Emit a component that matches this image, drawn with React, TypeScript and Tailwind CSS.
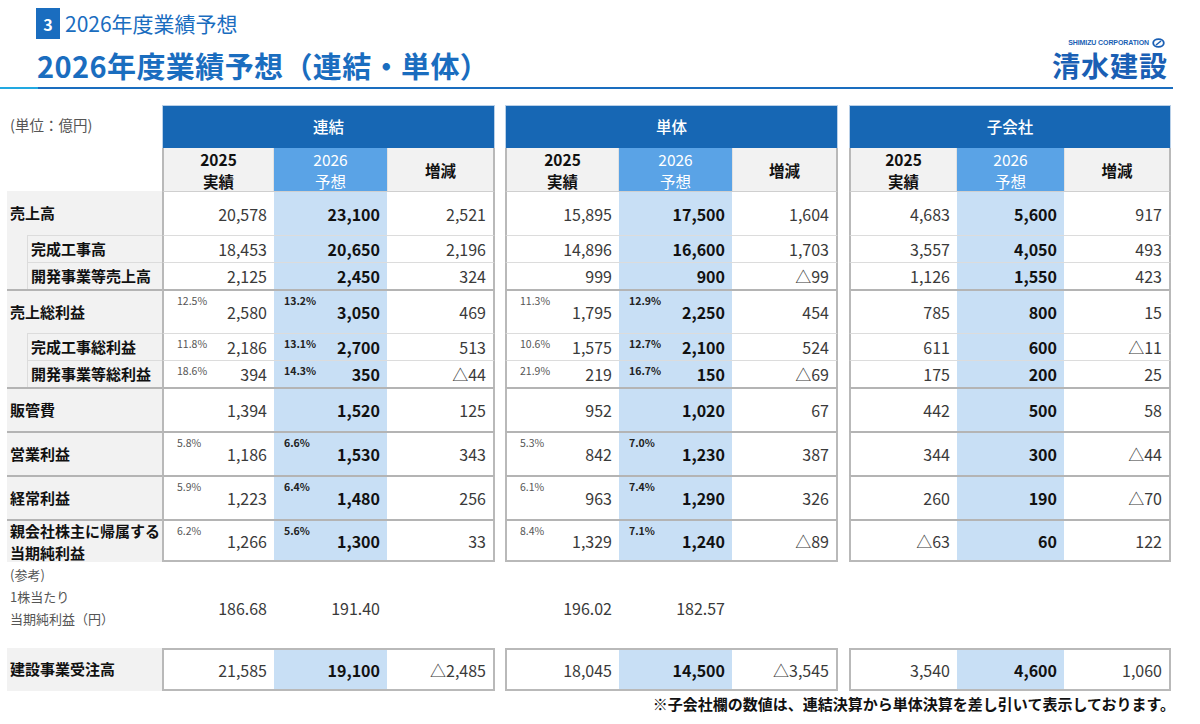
import React from "react";

const FONT = { fontFamily: '"Noto Sans CJK JP", "Noto Sans", sans-serif' };
const GRID =
  "grid grid-cols-[155px_112px_113px_108px_10px_114px_113px_106px_11px_108px_107px_107px]";

type V = [string | null, string, string | null, string, string];

type RowDef = {
  label: string;
  kind: "major" | "minor";
  first?: boolean;
  h: number;
  two?: boolean;
  data: [V, V, V];
};

const rows: RowDef[] = [
  {
    label: "売上高",
    kind: "major",
    first: true,
    h: 44,
    data: [
      [null, "20,578", null, "23,100", "2,521"],
      [null, "15,895", null, "17,500", "1,604"],
      [null, "4,683", null, "5,600", "917"],
    ],
  },
  {
    label: "完成工事高",
    kind: "minor",
    h: 27,
    data: [
      [null, "18,453", null, "20,650", "2,196"],
      [null, "14,896", null, "16,600", "1,703"],
      [null, "3,557", null, "4,050", "493"],
    ],
  },
  {
    label: "開発事業等売上高",
    kind: "minor",
    h: 27,
    data: [
      [null, "2,125", null, "2,450", "324"],
      [null, "999", null, "900", "△99"],
      [null, "1,126", null, "1,550", "423"],
    ],
  },
  {
    label: "売上総利益",
    kind: "major",
    h: 44,
    data: [
      ["12.5%", "2,580", "13.2%", "3,050", "469"],
      ["11.3%", "1,795", "12.9%", "2,250", "454"],
      [null, "785", null, "800", "15"],
    ],
  },
  {
    label: "完成工事総利益",
    kind: "minor",
    h: 27,
    data: [
      ["11.8%", "2,186", "13.1%", "2,700", "513"],
      ["10.6%", "1,575", "12.7%", "2,100", "524"],
      [null, "611", null, "600", "△11"],
    ],
  },
  {
    label: "開発事業等総利益",
    kind: "minor",
    h: 27,
    data: [
      ["18.6%", "394", "14.3%", "350", "△44"],
      ["21.9%", "219", "16.7%", "150", "△69"],
      [null, "175", null, "200", "25"],
    ],
  },
  {
    label: "販管費",
    kind: "major",
    h: 44,
    data: [
      [null, "1,394", null, "1,520", "125"],
      [null, "952", null, "1,020", "67"],
      [null, "442", null, "500", "58"],
    ],
  },
  {
    label: "営業利益",
    kind: "major",
    h: 44,
    data: [
      ["5.8%", "1,186", "6.6%", "1,530", "343"],
      ["5.3%", "842", "7.0%", "1,230", "387"],
      [null, "344", null, "300", "△44"],
    ],
  },
  {
    label: "経常利益",
    kind: "major",
    h: 44,
    data: [
      ["5.9%", "1,223", "6.4%", "1,480", "256"],
      ["6.1%", "963", "7.4%", "1,290", "326"],
      [null, "260", null, "190", "△70"],
    ],
  },
  {
    label: "親会社株主に帰属する\n当期純利益",
    kind: "major",
    h: 43,
    two: true,
    data: [
      ["6.2%", "1,266", "5.6%", "1,300", "33"],
      ["8.4%", "1,329", "7.1%", "1,240", "△89"],
      [null, "△63", null, "60", "122"],
    ],
  },
];

function secEdge(idx: number) {
  if (idx === 0) return "border-l-2 border-l-[#b9b9b9]";
  if (idx === 2) return "border-r-2 border-r-[#b9b9b9]";
  return "";
}

function DataCell({
  idx,
  pct,
  val,
  h,
  top,
  bottom,
}: {
  idx: number;
  pct: string | null;
  val: string;
  h: number;
  top: string;
  bottom?: boolean;
}) {
  const bold = idx === 1;
  return (
    <div
      className={`relative flex items-center justify-end pr-[7px] ${top} ${secEdge(idx)} ${
        bottom ? "border-b-2 border-b-[#b9b9b9]" : ""
      } ${bold ? "bg-[#c8dff5] font-bold text-[#111]" : "bg-white text-[#3a3a3a]"} text-[16px]`}
      style={{ height: h }}
    >
      {pct ? (
        <span
          className={`absolute top-[3px] text-[10.5px] leading-[14px] ${
            bold ? "left-[10px] font-bold text-[#222]" : "left-[13px] font-normal text-[#555]"
          }`}
        >
          {pct}
        </span>
      ) : null}
      <span className="leading-none">{val}</span>
    </div>
  );
}

function TableRow({ r, last }: { r: RowDef; last: boolean }) {
  const top = r.first
    ? "border-t border-t-[#cfcfcf]"
    : r.kind === "major"
    ? "border-t-2 border-t-[#b4b4b4]"
    : "border-t border-t-[#dcdcdc]";
  const labelCell =
    r.kind === "minor" ? (
      <div className="bg-[#f2f2f2]" style={{ height: r.h }}>
        <div className="ml-[20px] h-full border-l border-l-[#dcdcdc] border-t border-t-[#dcdcdc] flex items-center pl-[3px] text-[15px] font-bold text-[#111]">
          {r.label}
        </div>
      </div>
    ) : (
      <div
        className={`bg-[#f2f2f2] flex items-center pl-[3px] text-[15px] font-bold text-[#111] ${
          r.first ? "" : "border-t-2 border-t-[#b4b4b4]"
        }`}
        style={{ height: r.h }}
      >
        {r.two ? (
          <div className="leading-[22px] whitespace-pre-line">{r.label}</div>
        ) : (
          r.label
        )}
      </div>
    );
  const cells: React.ReactNode[] = [labelCell];
  r.data.forEach((d, s) => {
    if (s > 0) cells.push(<div key={"g" + s} />);
    cells.push(
      <DataCell key={s + "a"} idx={0} pct={d[0]} val={d[1]} h={r.h} top={top} bottom={last} />,
      <DataCell key={s + "b"} idx={1} pct={d[2]} val={d[3]} h={r.h} top={top} bottom={last} />,
      <DataCell key={s + "c"} idx={2} pct={null} val={d[4]} h={r.h} top={top} bottom={last} />
    );
  });
  return <div className={GRID}>{cells.map((c, i) => <React.Fragment key={i}>{c}</React.Fragment>)}</div>;
}

function SubHead() {
  const cell = (idx: number) => {
    const blue = idx === 1;
    return (
      <div
        className={`h-[43px] flex flex-col items-center justify-center text-[15.5px] leading-[22px] ${secEdge(idx)} ${
          blue ? "bg-[#5aa3e6] text-white" : "bg-[#f2f2f2] text-[#111] font-bold"
        } ${idx === 0 ? "border-r border-r-[#e2e2e2]" : ""} ${idx === 2 ? "border-l border-l-[#e2e2e2]" : ""}`}
      >
        {idx === 0 ? (
          <>
            <span>2025</span>
            <span>実績</span>
          </>
        ) : idx === 1 ? (
          <>
            <span>2026</span>
            <span>予想</span>
          </>
        ) : (
          <span>増減</span>
        )}
      </div>
    );
  };
  const out: React.ReactNode[] = [<div key="l" className="h-[43px] bg-white" />];
  [0, 1, 2].forEach((s) => {
    if (s > 0) out.push(<div key={"g" + s} />);
    out.push(
      <React.Fragment key={s}>
        {cell(0)}
        {cell(1)}
        {cell(2)}
      </React.Fragment>
    );
  });
  return <div className={GRID}>{out}</div>;
}

function HeadBar() {
  const names = ["連結", "単体", "子会社"];
  const out: React.ReactNode[] = [
    <div key="l" className="h-[43px] pl-[3px] pt-[9px] text-[14.5px] text-[#555]">
      (単位：億円)
    </div>,
  ];
  names.forEach((n, s) => {
    if (s > 0) out.push(<div key={"g" + s} />);
    out.push(
      <div
        key={n}
        className="col-span-3 h-[43px] bg-[#1767b4] border border-[#b9d0e8] border-b-0 flex items-center justify-center text-white text-[15.5px] font-medium"
      >
        {n}
      </div>
    );
  });
  return <div className={GRID}>{out}</div>;
}

function RefBlock() {
  const vals = [
    ["186.68", "191.40"],
    ["196.02", "182.57"],
    ["", ""],
  ];
  const out: React.ReactNode[] = [
    <div key="l" className="h-[86px] pl-[3px] pt-[2px] text-[13px] leading-[22px] text-[#555]">
      <div>(参考)</div>
      <div>1株当たり</div>
      <div>当期純利益（円）</div>
    </div>,
  ];
  vals.forEach((v, s) => {
    if (s > 0) out.push(<div key={"g" + s} />);
    out.push(
      <div key={s + "a"} className="h-[86px] flex items-center justify-end pr-[7px] pt-[6px] text-[16px] text-[#3a3a3a]">
        {v[0]}
      </div>,
      <div key={s + "b"} className="h-[86px] flex items-center justify-end pr-[7px] pt-[6px] text-[16px] text-[#3a3a3a]">
        {v[1]}
      </div>,
      <div key={s + "c"} />
    );
  });
  return <div className={GRID}>{out}</div>;
}

function OrderRow() {
  const data: [string, string, string][] = [
    ["21,585", "19,100", "△2,485"],
    ["18,045", "14,500", "△3,545"],
    ["3,540", "4,600", "1,060"],
  ];
  const top = "border-t-2 border-t-[#b9b9b9]";
  const out: React.ReactNode[] = [
    <div key="l" className="h-[43px] bg-[#f2f2f2] flex items-center pl-[3px] text-[15px] font-bold text-[#111]">
      建設事業受注高
    </div>,
  ];
  data.forEach((d, s) => {
    if (s > 0) out.push(<div key={"g" + s} />);
    out.push(
      <DataCell key={s + "a"} idx={0} pct={null} val={d[0]} h={43} top={top} bottom />,
      <DataCell key={s + "b"} idx={1} pct={null} val={d[1]} h={43} top={top} bottom />,
      <DataCell key={s + "c"} idx={2} pct={null} val={d[2]} h={43} top={top} bottom />
    );
  });
  return <div className={GRID}>{out}</div>;
}

function Logo() {
  return (
    <div className="flex flex-col items-end mr-[32px] mb-[8px]">
      <div className="flex items-center gap-[3px] mr-[3px] h-[10px] mb-[3px]">
        <span
          className="text-[7px] font-bold text-[#1a5fb4] leading-[8px] tracking-[-0.1px]"
          style={{ fontFamily: '"Liberation Sans", Arial, sans-serif' }}
        >
          SHIMIZU CORPORATION
        </span>
        <svg width="13" height="10" viewBox="0 0 13 10">
          <ellipse cx="6.5" cy="5" rx="5.3" ry="3.9" fill="none" stroke="#1a5fb4" strokeWidth="1.8" />
          <line x1="4" y1="7" x2="9" y2="3" stroke="#1a5fb4" strokeWidth="1.6" />
        </svg>
      </div>
      <div className="text-[28px] leading-[28px] font-bold text-[#1a5fb4] tracking-[1px]">清水建設</div>
    </div>
  );
}

export default function App() {
  return (
    <div className="w-[1200px] h-[724px] bg-white overflow-hidden" style={FONT}>
      <div className="pt-[8px] pl-[36px] flex items-center">
        <div className="w-[24px] h-[31px] bg-[#1a6dbf] text-white font-bold text-[16px] flex items-center justify-center">
          3
        </div>
        <div className="ml-[5px] text-[21px] text-[#1a6dbf] leading-[31px]">2026年度業績予想</div>
      </div>
      <div className="h-[48px] flex items-end justify-between">
        <div className="ml-[37px] mb-[3px] text-[29px] leading-[38px] font-bold text-[#1a6dbf] tracking-[0.4px]">
          2026年度業績予想（連結・単体）
        </div>
        <Logo />
      </div>
      <div className="flex h-[2px] mr-[27px]">
        <div className="w-[38px] bg-[#22a9e1]" />
        <div className="flex-1 bg-[#1a6dbf]" />
      </div>
      <div className="ml-[7px] mt-[16px]">
        <HeadBar />
        <SubHead />
        {rows.map((r, i) => (
          <TableRow key={i} r={r} last={i === rows.length - 1} />
        ))}
        <RefBlock />
        <OrderRow />
        <div className="text-right pr-[25px] text-[15px] leading-[22px] font-bold text-[#111] mt-[2px]">
          ※子会社欄の数値は、連結決算から単体決算を差し引いて表示しております。
        </div>
      </div>
    </div>
  );
}
